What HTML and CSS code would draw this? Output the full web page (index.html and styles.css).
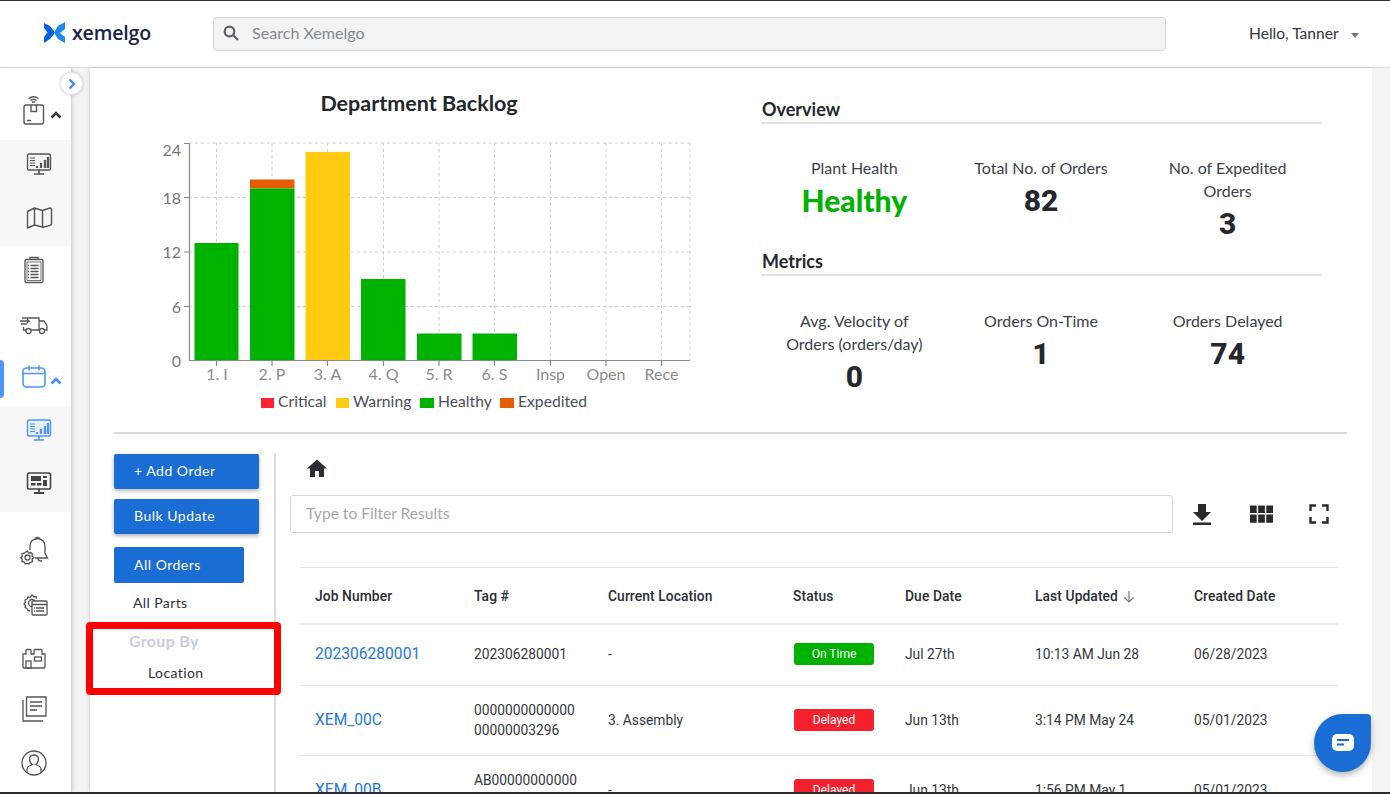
FILE: index.html
```html
<!DOCTYPE html>
<html lang="en">
<head>
<meta charset="utf-8">
<title>Xemelgo</title>
<link rel="stylesheet" href="styles.css">
</head>
<body>
<div class="app">
  <header class="topbar">
    <div class="brand">
      <svg class="logo" width="22" height="22" viewBox="0 0 22 22">
        <path d="M0 1l6 3 5 6.500-5 6.500-6 4v-6l3.500-4.500L0 6z" fill="#0b5ee0"/>
        <path d="M21 0v7l-5 4 5 4v6l-7-4-4-6.500 4-6.500z" fill="#1f8bf0"/>
      </svg>
      <span class="brand-name">xemelgo</span>
    </div>
    <div class="search">
      <svg width="16" height="16" viewBox="0 0 16 16" fill="none" stroke="#5b6168" stroke-width="2.200"><circle cx="6.500" cy="6.500" r="4.800"/><path d="M10 10l5 5"/></svg>
      <span>Search Xemelgo</span>
    </div>
    <div class="user">Hello, Tanner<i class="caret"></i></div>
  </header>

  <div class="body">
    <nav class="nav">
      <button class="toggle" aria-label="Expand"><svg width="10" height="12" viewBox="0 0 10 12" fill="none" stroke="#3d8bff" stroke-width="2.400"><path d="M2.500 1.500L7 6l-4.500 4.500"/></svg></button>

      <div class="nav-row nav-first">
        <svg class="ico" width="30" height="34" viewBox="0 0 30 34" fill="none" stroke="#555" stroke-width="1.400"><path d="M9.500 5.500q5-3.500 10 0M11.500 7.500q3-2.200 6 0M13 9.300q1.500-1 3 0"/><rect x="5" y="12" width="19.500" height="19" rx="2"/><path d="M12 12v6.500h5.500V12M8 27.500h4"/></svg>
        <svg class="chev" width="12" height="8" viewBox="0 0 12 8" fill="none" stroke="#333" stroke-width="2.600"><path d="M1.500 6.500L6 2l4.500 4.500"/></svg>
      </div>
      <div class="nav-sub">
        <div class="sub-row">
          <svg class="mon" width="30" height="26" viewBox="0 0 30 26" fill="none" stroke="#555" stroke-width="1.400"><rect x="3.500" y="2" width="23" height="16" rx="1.500"/><path d="M15 18v3.500M10 22h10" stroke-width="1.700"/><path d="M6 6h5M6 8.500h5M6 11h5M6 13.500h5" stroke-width="1"/><path d="M13 16v-2M17 16v-5M21 16V8M24 16V5" stroke-width="2.300"/></svg>
        </div>
        <div class="sub-row">
          <svg width="30" height="26" viewBox="0 0 30 26" fill="none" stroke="#555" stroke-width="1.400" stroke-linejoin="round"><path d="M3.500 7.500l7-3.500v17l-7 3zM10.500 4l8 2.500V23l-8-2zM18.500 6.500L26 4q1.500 0 1.500 1.500v14q0 1.500-1.500 1.800L18.500 23.500z"/></svg>
        </div>
      </div>
      <div class="nav-row">
        <svg class="ico" width="30" height="30" viewBox="0 0 30 30" fill="none" stroke="#555" stroke-width="1.300"><rect x="6" y="4.500" width="18" height="23" rx="1.500"/><rect x="8" y="7" width="14" height="18.500" stroke-width=".8"/><path d="M11 4.500V2.500h8v2M11.500 10.500h8M11.500 13.500h8M11.500 16.500h8M11.500 19.500h8M11.500 22.500h8M9 10.500h1M9 13.500h1M9 16.500h1M9 19.500h1M9 22.500h1"/></svg>
      </div>
      <div class="nav-row">
        <svg class="ico" width="30" height="30" viewBox="0 0 30 30" fill="none" stroke="#555" stroke-width="1.300"><path d="M3 9h17v12h-8M7 21H4.500V18M20 12h5l3 5v4h-2.500M20 21h1M1 12h9l-2-2M8 14l2-2M2 15h6"/><circle cx="9.500" cy="22" r="2.500"/><circle cx="23" cy="22" r="2.500"/></svg>
      </div>
      <div class="nav-row nav-active">
        <span class="active-bar"></span>
        <svg class="ico ico-up" width="30" height="26" viewBox="0 0 30 26" fill="none" stroke="#4f94ff" stroke-width="1.600"><rect x="4" y="5" width="22" height="19" rx="3.500"/><path d="M4 10.500h22M10 2.500v5M20 2.500v5"/></svg>
        <svg class="chev chev-active" width="12" height="8" viewBox="0 0 12 8" fill="none" stroke="#3d8bff" stroke-width="2.600"><path d="M1.500 6.500L6 2l4.500 4.500"/></svg>
      </div>
      <div class="nav-sub nav-sub-second">
        <div class="sub-row">
          <svg class="mon" width="30" height="26" viewBox="0 0 30 26" fill="none" stroke="#4f94ff" stroke-width="1.400"><rect x="3.500" y="2" width="23" height="16" rx="1.500" fill="#e6f0ff"/><path d="M15 18v3.500M10 22h10" stroke-width="1.700"/><path d="M6 6h5M6 8.500h5M6 11h5M6 13.500h5" stroke-width="1"/><path d="M13 16v-2M17 16v-5M21 16V8M24 16V5" stroke-width="2.300"/></svg>
        </div>
        <div class="sub-row">
          <svg class="mon" width="30" height="26" viewBox="0 0 30 26" fill="none" stroke="#444" stroke-width="1.600"><rect x="3.500" y="2" width="23" height="16" rx="1.500"/><path d="M15 18v3.500M10 22h10" stroke-width="1.800"/><path d="M7 5h10v5H7zM19 5h4v2h-4zM19 9h4v6h-4z" fill="#444" stroke="none"/><path d="M7 12h4.500v2.500H7zM13 12h4.500v2.500H13z" fill="#444" stroke="none"/></svg>
        </div>
      </div>
      <div class="nav-lower">
        <div class="nav-row">
          <svg class="ico" width="30" height="30" viewBox="0 0 30 30" fill="none" stroke="#555" stroke-width="1.300"><path d="M11 14V9.500q0-6 7.500-7 7.500 1 7.500 8v6.500l2.500 5H16"/><path d="M16 2.800q2.500-2.500 5 0"/><path d="M19 22q0 3 3 3h1"/><circle cx="8.500" cy="21.500" r="2.500"/><path d="M8.500 15l1.200 2 2.300-.5 1.500 1.500-.5 2.300 1.800 1.200-1.800 1.700.5 2.300-2.300.9-1.200 1.600-1.700-.6-2 .6-1.100-1.900-2.300-.6.4-2.300-1.600-1.400 1.600-1.700-.4-2.300 2.300-.6z"/></svg>
        </div>
        <div class="nav-row">
          <svg class="ico" width="30" height="30" viewBox="0 0 30 30" fill="none" stroke="#555" stroke-width="1.300"><path d="M11 22l-2-.5-1-2-2-1 .5-2L5 15l1.500-2-.5-2 2-1 1-2 2 .5L13 6l2 2 2-.5.500 2"/><circle cx="13" cy="14" r="3.500"/><rect x="13" y="12" width="15" height="14" rx="1" fill="#fff"/><path d="M13 15.500h15M17 19h8M17 22h8M15 19h.8M15 22h.8"/></svg>
        </div>
        <div class="nav-row">
          <svg class="ico" width="30" height="30" viewBox="0 0 30 30" fill="none" stroke="#555" stroke-width="1.300"><path d="M4 12h3V8.500q0-1 1-1h3q1 0 1 1V12h3V8.500q0-1 1-1h6q1 0 1 1V12h3v13q0 1-1 1H5q-1 0-1-1z"/><rect x="15.500" y="15" width="7" height="4"/><rect x="7" y="19" width="5" height="7"/></svg>
        </div>
        <div class="nav-row">
          <svg class="ico" width="30" height="30" viewBox="0 0 30 30" fill="none" stroke="#555" stroke-width="1.300"><path d="M7.500 2h19.500v19H7.500zM11 7h12M11 11h12M11 15h7"/><path d="M4 5v21h20"/></svg>
        </div>
        <div class="nav-row">
          <svg class="ico" width="30" height="30" viewBox="0 0 30 30" fill="none" stroke="#555" stroke-width="1.300"><circle cx="15" cy="15" r="12"/><path d="M8 24.500v-3q0-3 3.500-4l2-1q-3-2-3-5.500 0-3.500 4.500-4 4.500.5 4.500 4 0 3.500-3 5.500l2 1q3.500 1 3.500 4v3"/></svg>
        </div>
      </div>
    </nav>

    <div class="gutter"></div>

    <main class="content">
      <section class="summary">
        <div class="chart">
          <h2 class="chart-title">Department Backlog</h2>
          <svg class="chart-svg" width="610" height="300" viewBox="114 120 610 300">
            <g class="grid">
              <path d="M189 143H690M189 197.500H690M189 252H690M189 306.500H690"/>
              <path d="M216.500 143V360M272 143V360M327.500 143V360M383.500 143V360M439 143V360M494.500 143V360M550.500 143V360M606 143V360M661.500 143V360M690 143V360"/>
            </g>
            <g class="bars">
              <rect x="194.500" y="243" width="44" height="117.500" fill="#00b200"/>
              <rect x="250" y="179.500" width="44.500" height="9" fill="#e65c00"/>
              <rect x="250" y="188.500" width="44.500" height="172" fill="#00b200"/>
              <rect x="305.500" y="152" width="44.500" height="208.500" fill="#ffcc12"/>
              <rect x="361" y="279" width="44.500" height="81.500" fill="#00b200"/>
              <rect x="417" y="333.500" width="44.500" height="27" fill="#00b200"/>
              <rect x="472.500" y="333.500" width="44.500" height="27" fill="#00b200"/>
            </g>
            <path class="axis" d="M184 143.500h5.500V360.500H690M184 197.500h5M184 252h5M184 306.500h5M216.500 361v5M272 361v5M327.500 361v5M383.500 361v5M439 361v5M494.500 361v5M550.500 361v5M606 361v5M661.500 361v5"/>
            <g class="y-labels">
              <text x="181" y="156">24</text><text x="181" y="204">18</text><text x="181" y="258">12</text><text x="181" y="312.500">6</text><text x="181" y="366.500">0</text>
            </g>
            <g class="x-labels">
              <text x="217" y="380">1. I</text><text x="272" y="380">2. P</text><text x="327.500" y="380">3. A</text><text x="383.500" y="380">4. Q</text><text x="439" y="380">5. R</text><text x="494.500" y="380">6. S</text><text x="550.500" y="380">Insp</text><text x="606" y="380">Open</text><text x="661.500" y="380">Rece</text>
            </g>
            <g class="legend">
              <rect x="261" y="398" width="13" height="10" fill="#ff2230"/><text x="278" y="406.500">Critical</text>
              <rect x="336" y="398" width="13" height="10" fill="#ffcc12"/><text x="353" y="406.500">Warning</text>
              <rect x="420" y="398" width="14" height="10" fill="#00b200"/><text x="438" y="406.500">Healthy</text>
              <rect x="500" y="398" width="14" height="10" fill="#e65c00"/><text x="518" y="406.500">Expedited</text>
            </g>
          </svg>
        </div>

        <div class="stats">
          <h3 class="stats-head">Overview</h3>
          <div class="stats-grid stats-grid-first">
            <div class="stat"><div class="stat-label">Plant Health</div><div class="stat-value stat-good">Healthy</div></div>
            <div class="stat"><div class="stat-label">Total No. of Orders</div><div class="stat-value">82</div></div>
            <div class="stat"><div class="stat-label">No. of Expedited Orders</div><div class="stat-value">3</div></div>
          </div>
          <h3 class="stats-head stats-head-second">Metrics</h3>
          <div class="stats-grid">
            <div class="stat"><div class="stat-label">Avg. Velocity of Orders (orders/day)</div><div class="stat-value">0</div></div>
            <div class="stat"><div class="stat-label">Orders On-Time</div><div class="stat-value">1</div></div>
            <div class="stat"><div class="stat-label">Orders Delayed</div><div class="stat-value">74</div></div>
          </div>
        </div>
      </section>

      <section class="orders">
        <aside class="menu">
          <button class="btn btn-wide">+ Add Order</button>
          <button class="btn btn-wide">Bulk Update</button>
          <button class="btn btn-tab">All Orders</button>
          <div class="menu-link">All Parts</div>
          <div class="menu-group">Group By</div>
          <div class="menu-sublink">Location</div>
          <div class="callout"></div>
        </aside>

        <div class="panel">
          <div class="crumb">
            <svg width="20" height="18" viewBox="0 0 20 18"><path d="M10 .5L0 9.500h3V18h5v-6h4v6h5V9.500h3z" fill="#2b2f33"/></svg>
          </div>
          <div class="tools">
            <div class="filter">Type to Filter Results</div>
            <svg class="tool tool-dl" width="20" height="22" viewBox="0 0 20 22"><path d="M6 1h8v8h5l-9 9-9-9h5zM1 19.500h18V22H1z" fill="#26292d"/></svg>
            <svg class="tool tool-grid" width="23" height="18" viewBox="0 0 24 18" fill="#26292d"><path d="M0 0h7v8H0zM8.500 0h7v8h-7zM17 0h7v8h-7zM0 9.500h7V18H0zM8.500 9.500h7V18h-7zM17 9.500h7V18h-7z"/></svg>
            <svg class="tool tool-full" width="20" height="20" viewBox="0 0 20 20" fill="none" stroke="#26292d" stroke-width="2.400"><path d="M1.500 7V1.500H7M13 1.500h5.500V7M18.500 13v5.500H13M7 18.500H1.500V13"/></svg>
          </div>
          <table class="table">
            <colgroup><col class="c1"><col class="c2"><col class="c3"><col class="c4"><col class="c5"><col class="c6"><col class="c7"></colgroup>
            <thead>
              <tr><th>Job Number</th><th>Tag #</th><th>Current Location</th><th>Status</th><th>Due Date</th><th>Last Updated <svg class="sort" width="12" height="13" viewBox="0 0 12 13" fill="none" stroke="#777" stroke-width="1.200"><path d="M6 1v11M1.500 7.500L6 12l4.500-4.500"/></svg></th><th>Created Date</th></tr>
            </thead>
            <tbody>
              <tr><td><a class="job">202306280001</a></td><td><span class="tag">202306280001</span></td><td>-</td><td><span class="badge badge-ok">On Time</span></td><td>Jul 27th</td><td>10:13 AM Jun 28</td><td>06/28/2023</td></tr>
              <tr class="row-tall"><td><a class="job">XEM_00C</a></td><td><span class="tag">000000000000000000003296</span></td><td>3. Assembly</td><td><span class="badge badge-late">Delayed</span></td><td>Jun 13th</td><td>3:14 PM May 24</td><td>05/01/2023</td></tr>
              <tr class="row-tall"><td><a class="job">XEM_00B</a></td><td><span class="tag">AB000000000000000003295</span></td><td>-</td><td><span class="badge badge-late">Delayed</span></td><td>Jun 13th</td><td>1:56 PM May 1</td><td>05/01/2023</td></tr>
            </tbody>
          </table>
        </div>
      </section>
    </main>

    <div class="gutter"></div>
  </div>

  <button class="chat" aria-label="Chat">
    <svg width="24" height="18" viewBox="0 0 24 18"><rect x="1" y="0" width="22" height="17" rx="5" fill="#fff"/><path d="M6 6h12M6 10.500h7" stroke="#1a6dd4" stroke-width="2" fill="none"/></svg>
  </button>
</div>
</body>
</html>
```

FILE: styles.css
```css
* { box-sizing: border-box; }
html, body { margin: 0; height: 100%; overflow: hidden; }
body { font-family: "Lato", "Liberation Sans", sans-serif; color: #24272b; background: #fff; }
h2, h3 { margin: 0; }

.app { position: relative; width: 1390px; height: 794px; display: flex; flex-direction: column; border-top: 1px solid #333; border-bottom: 2px solid #2b2b2b; overflow: hidden; }

/* top bar */
.topbar { flex: 0 0 67px; display: flex; align-items: center; border-bottom: 1px solid #d9dbdd; background: #fff; }
.brand { width: 213px; padding-left: 44px; display: flex; align-items: center; gap: 6px; }
.logo { flex: none; margin-top: -2px; }
.brand-name { font-family: "Open Sans", sans-serif; font-size: 19.600px; font-weight: 600; color: #1b2444; letter-spacing: -.2px; position: relative; top: -2px; }
.search { width: 953px; height: 34px; margin-top: -1px; display: flex; align-items: center; gap: 13px; padding: 0 0 3px 9px; background: #f1f3f5; border: 1px solid #d3d7db; border-radius: 4px; font-size: 16.100px; color: #83898f; }
.search svg { margin-top: 2px; }
.user { margin-left: 83px; padding-bottom: 2px; display: flex; align-items: center; font-size: 15.600px; color: #33373b; }
.caret { width: 0; height: 0; margin-left: 12px; margin-top: 4px; border-left: 4.500px solid transparent; border-right: 4.500px solid transparent; border-top: 5px solid #777; }

/* body layout */
.body { flex: 1; min-height: 0; display: flex; }
.nav { position: relative; flex: 0 0 72px; display: flex; flex-direction: column; background: #fff; border-right: 1px solid #d7d7d7; box-shadow: 1px 0 3px rgba(0,0,0,.12); z-index: 2; }
.gutter { flex: 0 0 18px; background: #f4f4f4; }
.content { flex: 0 0 1282px; padding: 0 25px 0 24px; background: #fff; box-shadow: 0 0 4px rgba(0,0,0,.18); }

/* nav */
.toggle { position: absolute; left: 60px; top: 4px; width: 23px; height: 23px; padding: 0; display: flex; align-items: center; justify-content: center; border: 1px solid #e6e6e6; border-radius: 50%; background: #fff; box-shadow: 0 0 3px rgba(0,0,0,.2); }
.nav-row { height: 48px; margin-bottom: 6px; display: flex; align-items: center; padding-left: 19px; }
.nav-first { height: 72px; margin-bottom: 0; padding-top: 12px; }
.ico { flex: none; }
.chev { flex: none; margin-left: 1px; margin-top: 10px; }
.nav-sub { height: 106px; padding-left: 24px; background: #f7f7f7; display: flex; flex-direction: column; gap: 8px; }
.sub-row { height: 46px; display: flex; align-items: center; }
.mon { margin-top: 3px; }
.nav-active { height: 38px; margin: 6px 0 8px; padding-left: 0; }
.active-bar { flex: none; width: 4px; align-self: stretch; margin-right: 15px; background: #4f94ff; border-radius: 0 4px 4px 0; }
.ico-up { margin-bottom: 6px; }
.chev-active { margin-top: 4px; }
.nav-sub-second { gap: 7px; }
.nav-lower { margin-top: 15px; display: flex; flex-direction: column; gap: 5px; }
.nav-lower .nav-row { margin-bottom: 0; }

/* summary */
.summary { height: 366px; display: flex; border-bottom: 2px solid #d9d9d9; }
.chart { flex: 0 0 610px; }
.chart-title { padding-top: 23px; height: 52px; text-align: center; font-size: 21.500px; font-weight: 700; line-height: 24px; color: #22262a; }
.chart-svg { display: block; }
.grid path { fill: none; stroke: #d0d0d0; stroke-width: 1; stroke-dasharray: 3 3; }
.axis { fill: none; stroke: #8a8a8a; stroke-width: 1.200; }
.y-labels text { font-size: 16px; fill: #777; text-anchor: end; }
.x-labels text { font-size: 16px; fill: #8c8c8c; text-anchor: middle; }
.legend text { font-size: 15.700px; fill: #4c5056; }

.stats { flex: 0 0 560px; margin-left: 37px; padding-top: 30px; }
.stats-head { height: 26px; padding-left: 1px; font-size: 18px; line-height: 22px; font-weight: 700; color: #24272b; border-bottom: 2px solid #e3e3e3; }
.stats-head-second { margin-top: 5px; }
.stats-grid { display: grid; grid-template-columns: repeat(3, 1fr); padding-top: 33px; }
.stats-grid-first { padding-top: 32px; }
.stat { text-align: center; padding: 0 24px; }
.stat-label { font-size: 16px; line-height: 23px; color: #3c4045; font-weight: 400; }
.stat-value { font-family: "Roboto", sans-serif; font-size: 30px; line-height: 43px; font-weight: 800; color: #24272b; }
.stat-good { font-family: "Lato", sans-serif; font-size: 30px; font-weight: 900; color: #00b200; }

/* orders */
.orders { height: 360px; display: flex; }
.menu { position: relative; flex: 0 0 162px; margin-top: 19px; padding-top: 1px; border-right: 2px solid #dcdcdc; }
.btn { display: block; padding: 0 0 2px 20px; border: 0; border-radius: 2px; background: #1a6dd4; color: #fff; font-family: "Lato", sans-serif; font-size: 14px; letter-spacing: .5px; text-align: left; }
.btn-wide { width: 145px; height: 35px; margin-bottom: 10px; box-shadow: 0 2px 4px rgba(0,0,0,.3); }
.btn-tab { width: 130px; height: 36px; margin-top: 13px; }
.menu-link { height: 40px; padding-left: 19px; line-height: 40px; font-size: 14px; letter-spacing: .4px; color: #2c2f33; }
.menu-group { height: 37px; padding-left: 15px; line-height: 36px; font-size: 16px; letter-spacing: .3px; font-weight: 700; color: #c8cedb; }
.menu-sublink { padding-left: 34px; line-height: 26px; font-size: 14px; letter-spacing: .4px; color: #2c2f33; }
.callout { position: absolute; left: -28px; top: 169px; width: 195px; height: 73px; border: 7px solid #ff0000; border-radius: 4px; }

.panel { flex: 1; min-width: 0; padding: 25px 9px 0 14px; }
.crumb { height: 18px; margin-left: 17px; display: flex; }
.crumb svg { display: block; }
.tools { margin-top: 18px; display: flex; align-items: center; }
.filter { width: 883px; height: 38px; padding-left: 15px; line-height: 35px; border: 1.500px solid #d8d8d8; border-radius: 3px; font-size: 15.600px; color: #a5a8ab; }
.tool { flex: none; }
.tool-dl { margin-left: 19px; }
.tool-grid { margin-left: 38px; }
.tool-full { margin-left: 36px; }

.table { width: 1038px; margin: 34px 0 0 10px; border-collapse: collapse; table-layout: fixed; font-family: "Roboto", sans-serif; font-size: 13.800px; color: #33373b; }
.c1 { width: 174px; } .c2 { width: 134px; } .c3 { width: 185px; } .c4 { width: 112px; } .c5 { width: 130px; } .c6 { width: 159px; } .c7 { width: 144px; }
.table th { height: 56px; padding: 2px 0 0; border-top: 1px solid #e6e6e6; border-bottom: 2px solid #ececec; text-align: left; font-weight: 500; font-size: 13.800px; color: #2a2d31; letter-spacing: .1px; }
.table td { height: 62px; padding: 0 0 2px; border-bottom: 1px solid #e6e6e6; line-height: 20px; }
.table .row-tall td { height: 70px; padding-bottom: 1px; }
.table th:first-child, .table td:first-child { padding-left: 15px; }
.sort { margin-left: 1px; vertical-align: -2px; }
.job { font-size: 15.600px; color: #2377e0; }
.tag { display: block; width: 106px; word-break: break-all; }
.badge { display: block; width: 80px; height: 22px; margin-left: 1px; line-height: 22px; border-radius: 3px; text-align: center; font-size: 12px; color: #fff; }
.badge-ok { background: #00b200; }
.badge-late { background: #f5222d; }

.chat { position: absolute; left: 1314px; top: 713px; width: 57px; height: 58px; padding: 0; display: flex; align-items: center; justify-content: center; border: 0; border-radius: 50% 4px 50% 50%; background: #1a6dd4; box-shadow: 0 3px 6px rgba(0,0,0,.3); z-index: 3; }
```
